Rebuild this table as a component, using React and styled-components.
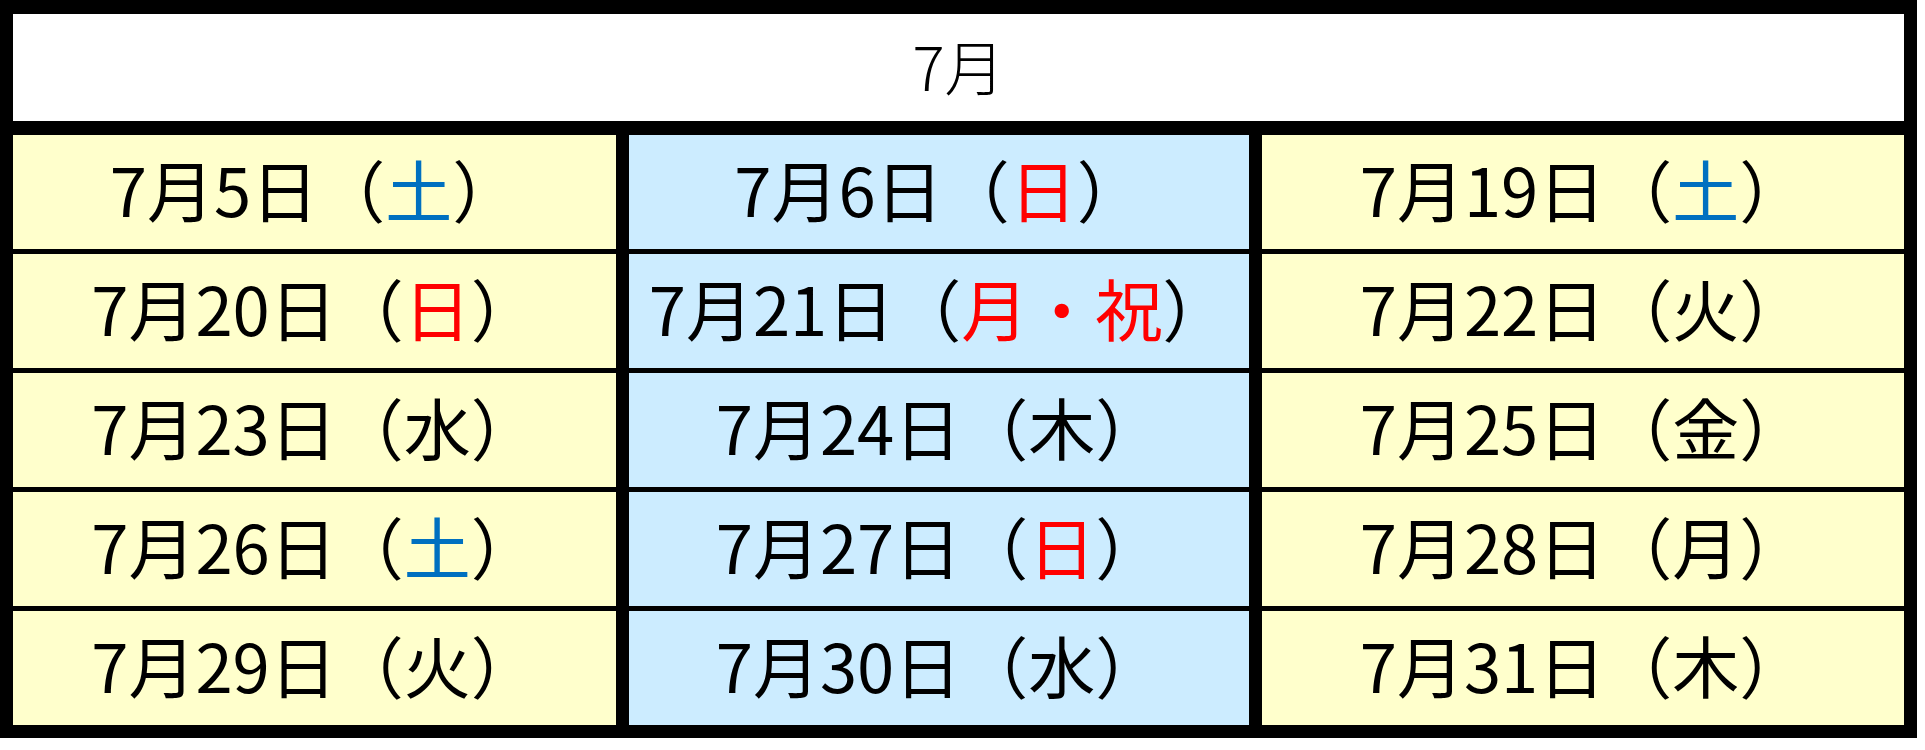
import React from 'react';
import styled, { createGlobalStyle } from 'styled-components';

const GlobalStyle = createGlobalStyle`
  body {
    margin: 0;
    background: #ffffff;
    font-family: "Noto Sans CJK JP", "Noto Sans", sans-serif;
  }
`;

const Table = styled.div`
  width: 1917px;
  box-sizing: border-box;
  border: 13px solid #000;
  border-top-width: 14px;
  background: #000;
`;

const Header = styled.div`
  height: 107px;
  box-sizing: border-box;
  padding-bottom: 6px;
  background: #fff;
  display: flex;
  align-items: center;
  justify-content: center;
  font-size: 60px;
  font-weight: 300;
  color: #000;
  margin-bottom: 14px;
`;

const Grid = styled.div`
  display: grid;
  grid-template-columns: 603px 620px 642px;
  grid-auto-rows: 114px;
  column-gap: 13px;
  row-gap: 5px;
  background: #000;
`;

const Cell = styled.div`
  background: ${({ tone }) => (tone === 'blue' ? '#ccecff' : '#ffffcc')};
  display: flex;
  align-items: center;
  justify-content: center;
  box-sizing: border-box;
  padding-bottom: 10px;
  font-size: 67px;
  line-height: 1;
  color: #000;
  white-space: nowrap;
`;

const Day = styled.span`
  color: ${({ kind }) => (kind === 'sat' ? '#0070c0' : kind === 'hol' ? '#ff0000' : '#000')};
`;

const rows = [
  [['5', '土', 'sat'], ['6', '日', 'hol'], ['19', '土', 'sat']],
  [['20', '日', 'hol'], ['21', '月・祝', 'hol'], ['22', '火']],
  [['23', '水'], ['24', '木'], ['25', '金']],
  [['26', '土', 'sat'], ['27', '日', 'hol'], ['28', '月']],
  [['29', '火'], ['30', '水'], ['31', '木']],
];

export default function App() {
  return (
    <>
      <GlobalStyle />
      <Table>
        <Header>7月</Header>
        <Grid>
          {rows.map((row, r) =>
            row.map(([d, w, kind], c) => (
              <Cell key={`${r}-${c}`} tone={c === 1 ? 'blue' : 'yellow'}>
                7月{d}日（<Day kind={kind}>{w}</Day>）
              </Cell>
            ))
          )}
        </Grid>
      </Table>
    </>
  );
}
